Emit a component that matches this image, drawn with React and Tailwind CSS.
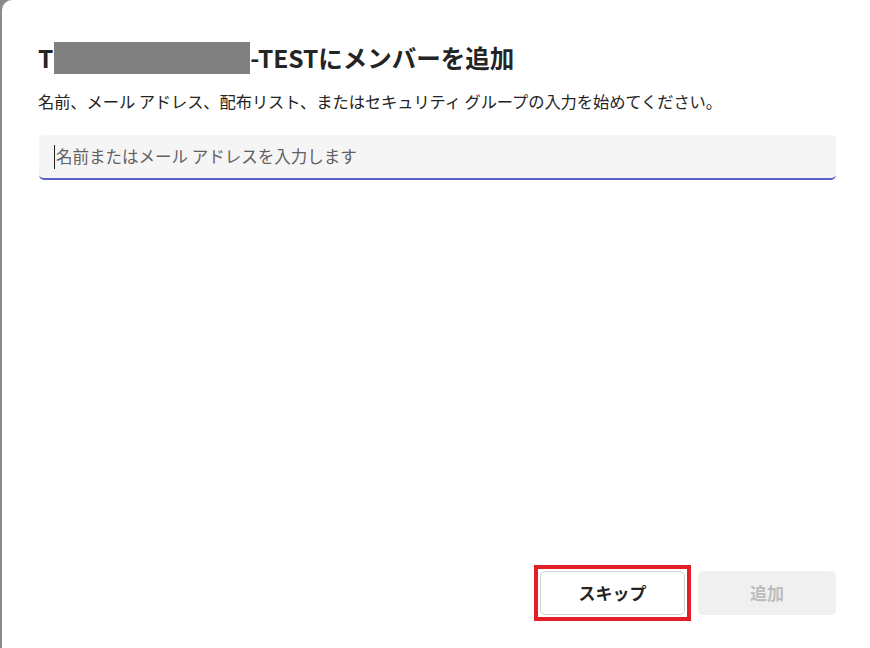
export default function App() {
  const jp = { fontFamily: '"Noto Sans CJK JP", "Noto Sans", sans-serif' };
  return (
    <div className="w-[870px] h-[648px] bg-[#8a8a8a] overflow-hidden pl-[2px]" style={jp}>
      <div className="w-[878px] h-[660px] bg-white rounded-[10px] flex flex-col pl-[36px] pr-[44px]">
        <div className="mt-[40px] h-[36px] flex items-center text-[24.5px] font-bold text-[#242424]">
          <span>T</span>
          <span className="inline-block w-[196px] h-[32px] bg-[#808080] ml-[1px]"></span>
          <span>-TESTにメンバーを追加</span>
        </div>
        <p className="mt-[14px] text-[16.3px] text-[#242424] leading-[22px] tracking-[-0.1px]">
          名前、メール アドレス、配布リスト、またはセキュリティ グループの入力を始めてください。
        </p>
        <div className="mt-[23px] ml-[1px] h-[45px] bg-[#f5f5f5] rounded-[5px] border-b-[2px] border-[#5b5fc7] flex items-center pl-[15px]">
          <span className="w-[1px] h-[24px] bg-[#242424] mr-[1px]"></span>
          <span className="text-[16.5px] text-[#616161]">名前またはメール アドレスを入力します</span>
        </div>
        <div className="flex-1"></div>
        <div className="flex justify-end items-center gap-[7px] mb-[39px]">
          <div className="border-[4px] border-[#e21e26] p-[2px] w-[157px] h-[56px]">
            <button className="w-full h-full bg-white border border-[#d1d1d1] rounded-[5px] text-[17px] font-bold text-[#242424]">
              スキップ
            </button>
          </div>
          <button className="w-[138px] h-[44px] bg-[#f0f0f0] rounded-[5px] text-[17px] font-bold text-[#bdbdbd]">
            追加
          </button>
        </div>
      </div>
    </div>
  );
}
